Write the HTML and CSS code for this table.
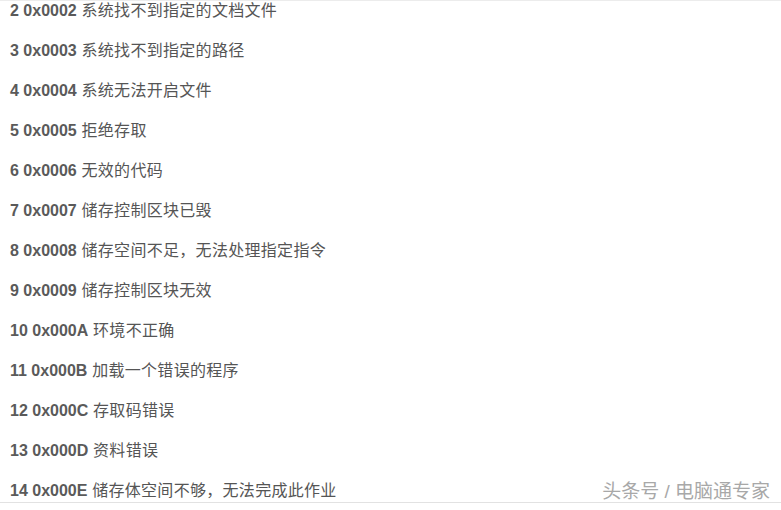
FILE: index.html
```html
<!DOCTYPE html>
<html lang="zh-CN">
<head>
    <meta charset="UTF-8">
    <meta name="viewport" content="width=device-width, initial-scale=1.0">
    <title>系统错误代码</title>
    <link rel="stylesheet" href="styles.css">
</head>
<body>
    <div class="article">
        <p><b>2 0x0002</b> 系统找不到指定的文档文件</p>
        <p><b>3 0x0003</b> 系统找不到指定的路径</p>
        <p><b>4 0x0004</b> 系统无法开启文件</p>
        <p><b>5 0x0005</b> 拒绝存取</p>
        <p><b>6 0x0006</b> 无效的代码</p>
        <p><b>7 0x0007</b> 储存控制区块已毁</p>
        <p><b>8 0x0008</b> 储存空间不足，无法处理指定指令</p>
        <p><b>9 0x0009</b> 储存控制区块无效</p>
        <p><b>10 0x000A</b> 环境不正确</p>
        <p><b>11 0x000B</b> 加载一个错误的程序</p>
        <p><b>12 0x000C</b> 存取码错误</p>
        <p><b>13 0x000D</b> 资料错误</p>
        <p><b>14 0x000E</b> 储存体空间不够，无法完成此作业</p>

        <!-- 水印 -->
        <div class="watermark">头条号 / 电脑通专家</div>
    </div>
</body>
</html>
```

FILE: styles.css
```css
body {
    margin: 0;
    background: white;
    font-family: "Liberation Sans", "Noto Sans CJK SC", sans-serif;
    color: #555;
}

.article {
    position: relative;
    border-top: 2px solid #ececec;
    border-bottom: 1px solid #e2e2e2;
    margin-top: -1px;
    padding: 0 10px 1px;
}

.article p {
    margin: 0 0 20px;
    font-size: 16px;
    line-height: 20px;
    letter-spacing: 0.3px;
    white-space: nowrap;
}

.article p:last-of-type {
    margin-bottom: 0;
}

.article b {
    color: #5a5a5a;
    letter-spacing: 0;
}

.watermark {
    position: absolute;
    right: 11px;
    bottom: 0;
    font-size: 19px;
    line-height: 20px;
    color: #a8a8a8;
    text-shadow: 0 0 1px #fff, 0 0 1px #fff;
}
```
